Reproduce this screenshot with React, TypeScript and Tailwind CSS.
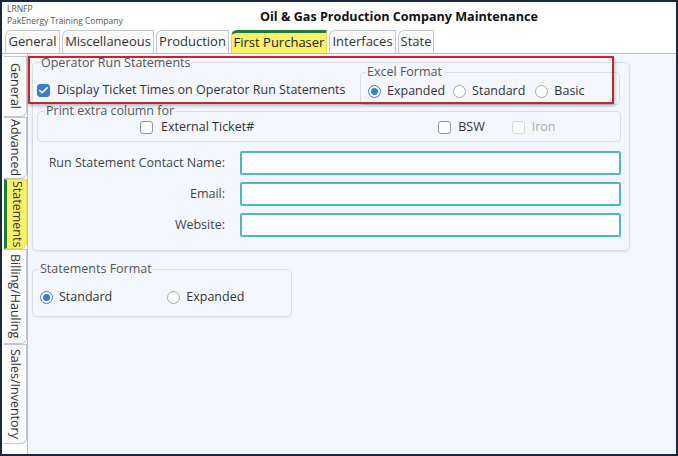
import { Check } from "lucide-react";

const topTabs = [
  { label: "General", w: "w-[55px]" },
  { label: "Miscellaneous", w: "w-[92px]" },
  { label: "Production", w: "w-[73px]" },
  { label: "First Purchaser", w: "w-[96px]", active: true },
  { label: "Interfaces", w: "w-[67px]" },
  { label: "State", w: "w-[36px]" },
];

const sideTabs = [
  { label: "General", h: "h-[61px]" },
  { label: "Advanced", h: "h-[62px]" },
  { label: "Statements", h: "h-[70px]", active: true },
  { label: "Billing/Hauling", h: "h-[95px]" },
  { label: "Sales/Inventory", h: "h-[100px]" },
];

const CheckBox = ({ checked, disabled }: { checked?: boolean; disabled?: boolean }) => (
  <span
    className={`flex items-center justify-center w-[13px] h-[13px] rounded-[3px] border ${
      checked
        ? "bg-[#3b7dd0] border-[#3b7dd0]"
        : disabled
        ? "bg-white border-[#d4d8dd]"
        : "bg-white border-[#8e949b]"
    }`}
  >
    {checked && <Check className="w-[11px] h-[11px] text-white" strokeWidth={3.5} />}
  </span>
);

const Radio = ({ checked }: { checked?: boolean }) => (
  <span
    className={`flex items-center justify-center w-[13px] h-[13px] rounded-full border bg-white ${
      checked ? "border-[#3b7dd0]" : "border-[#a3a8ae]"
    }`}
  >
    {checked && <span className="w-[7px] h-[7px] rounded-full bg-[#3b7dd0]" />}
  </span>
);

const Field = ({ label }: { label: string }) => (
  <div className="flex items-center h-[24px]">
    <span className="w-[193px] text-right pr-[15px] text-[#444]">{label}</span>
    <div className="w-[381px] h-[24px] bg-white border-2 border-[#4cbdb3] rounded-[2px]" />
  </div>
);

export default function App() {
  return (
    <div
      className="relative w-[678px] h-[456px] border-2 border-[#1b2740] bg-white flex flex-col overflow-hidden text-[12.5px] text-[#333]"
      style={{ fontFamily: "'Open Sans', 'Noto Sans', sans-serif" }}
    >
      {/* header */}
      <div className="flex h-[27px] shrink-0">
        <div className="w-[258px] pl-[5px] pt-[1px] text-[8.5px] leading-[11.5px] text-[#555]">
          <div>LRNFP</div>
          <div>PakEnergy Training Company</div>
        </div>
        <div className="pt-[6px] font-bold text-[12.6px] text-[#111] whitespace-nowrap">
          Oil &amp; Gas Production Company Maintenance
        </div>
      </div>

      {/* top tabs */}
      <div className="flex items-end h-[25px] shrink-0 pl-[3px] gap-[2px] border-b border-[#b9bec4] bg-white">
        {topTabs.map((t) => (
          <div
            key={t.label}
            className={`${t.w} h-[23px] flex items-center justify-center whitespace-nowrap text-[13px] rounded-tl-[6px] border border-b-0 ${
              t.active
                ? "bg-[#f8f26b] border-[#e6dc4a] border-t-[3px] border-t-[#1f7a3a] text-[#222]"
                : "bg-[#fafafa] border-[#c3c7cc] text-[#333]"
            }`}
          >
            {t.label}
          </div>
        ))}
      </div>

      {/* body */}
      <div className="flex flex-1 min-h-0">
        <div className="w-[26px] shrink-0 border-r border-[#b9bec4] bg-white pl-[2px] pt-[2px] flex flex-col">
          {sideTabs.map((t) => (
            <div
              key={t.label}
              className={`${t.h} flex items-center justify-center whitespace-nowrap text-[12.5px] rounded-br-[6px] border border-l-0 ${
                t.active
                  ? "bg-[#f8f26b] border-[#e6dc4a] border-l-[3px] border-l-[#1f7a3a]"
                  : "bg-[#fafafa] border-[#c3c7cc]"
              }`}
            >
              <span className="[writing-mode:vertical-rl] text-[#333]">{t.label}</span>
            </div>
          ))}
        </div>

        <div className="flex-1 bg-[#f3f7fd] pl-[4px] pt-[8px]">
          {/* main panel */}
          <div className="w-[598px] h-[189px] border border-[#d9dee5] rounded-[5px] shadow-[0_1px_2px_rgba(0,0,0,0.08)] px-[4px] relative">
            <div className="absolute left-[7px] -top-[7px] bg-[#f3f7fd] px-[1px] text-[#555] leading-[14px]">
              Operator Run Statements
            </div>
            <div className="flex items-start pt-[4px]">
              <div className="flex items-center gap-[7px] pt-[14px] w-[323px]">
                <CheckBox checked />
                <span className="text-[#333]">Display Ticket Times on Operator Run Statements</span>
              </div>
              <div className="relative mt-[5px] w-[260px] h-[33px] border border-[#d9dee5] rounded-[4px] flex items-end pb-[3px] pl-[7px]">
                <div className="absolute left-[5px] -top-[8px] bg-[#f3f7fd] px-[1px] text-[#555] leading-[14px]">
                  Excel Format
                </div>
                <div className="flex items-center gap-[6px]">
                  <Radio checked />
                  <span>Expanded</span>
                </div>
                <div className="flex items-center gap-[6px] ml-[8px]">
                  <Radio />
                  <span>Standard</span>
                </div>
                <div className="flex items-center gap-[6px] ml-[10px]">
                  <Radio />
                  <span>Basic</span>
                </div>
              </div>
            </div>

            {/* print extra column */}
            <div className="relative mt-[6px] w-[584px] h-[31px] border border-[#d9dee5] rounded-[4px] flex items-end pb-[4px]">
              <div className="absolute left-[7px] -top-[8px] bg-[#f3f7fd] px-[1px] text-[#555] leading-[14px]">
                Print extra column for
              </div>
              <div className="flex items-center gap-[8px] ml-[102px]">
                <CheckBox />
                <span>External Ticket#</span>
              </div>
              <div className="flex items-center gap-[7px] ml-[184px]">
                <CheckBox />
                <span>BSW</span>
              </div>
              <div className="flex items-center gap-[7px] ml-[27px]">
                <CheckBox disabled />
                <span className="text-[#aaa]">Iron</span>
              </div>
            </div>

            <div className="mt-[9px] flex flex-col gap-[7px] ml-[10px]">
              <Field label="Run Statement Contact Name:" />
              <Field label="Email:" />
              <Field label="Website:" />
            </div>
          </div>

          {/* statements format */}
          <div className="relative mt-[18px] w-[260px] h-[48px] border border-[#d9dee5] rounded-[5px] shadow-[0_1px_2px_rgba(0,0,0,0.06)] flex items-center pt-[8px] pl-[7px]">
            <div className="absolute left-[6px] -top-[8px] bg-[#f3f7fd] px-[1px] text-[#555] leading-[14px]">
              Statements Format
            </div>
            <div className="flex items-center gap-[6px]">
              <Radio checked />
              <span>Standard</span>
            </div>
            <div className="flex items-center gap-[6px] ml-[55px]">
              <Radio />
              <span>Expanded</span>
            </div>
          </div>
        </div>
      </div>

      {/* annotation box */}
      <div className="absolute left-[26px] top-[54px] w-[586px] h-[48px] border-[2.5px] border-[#c3272b] shadow-[1px_2px_3px_rgba(0,0,0,0.25)] pointer-events-none" />
    </div>
  );
}
